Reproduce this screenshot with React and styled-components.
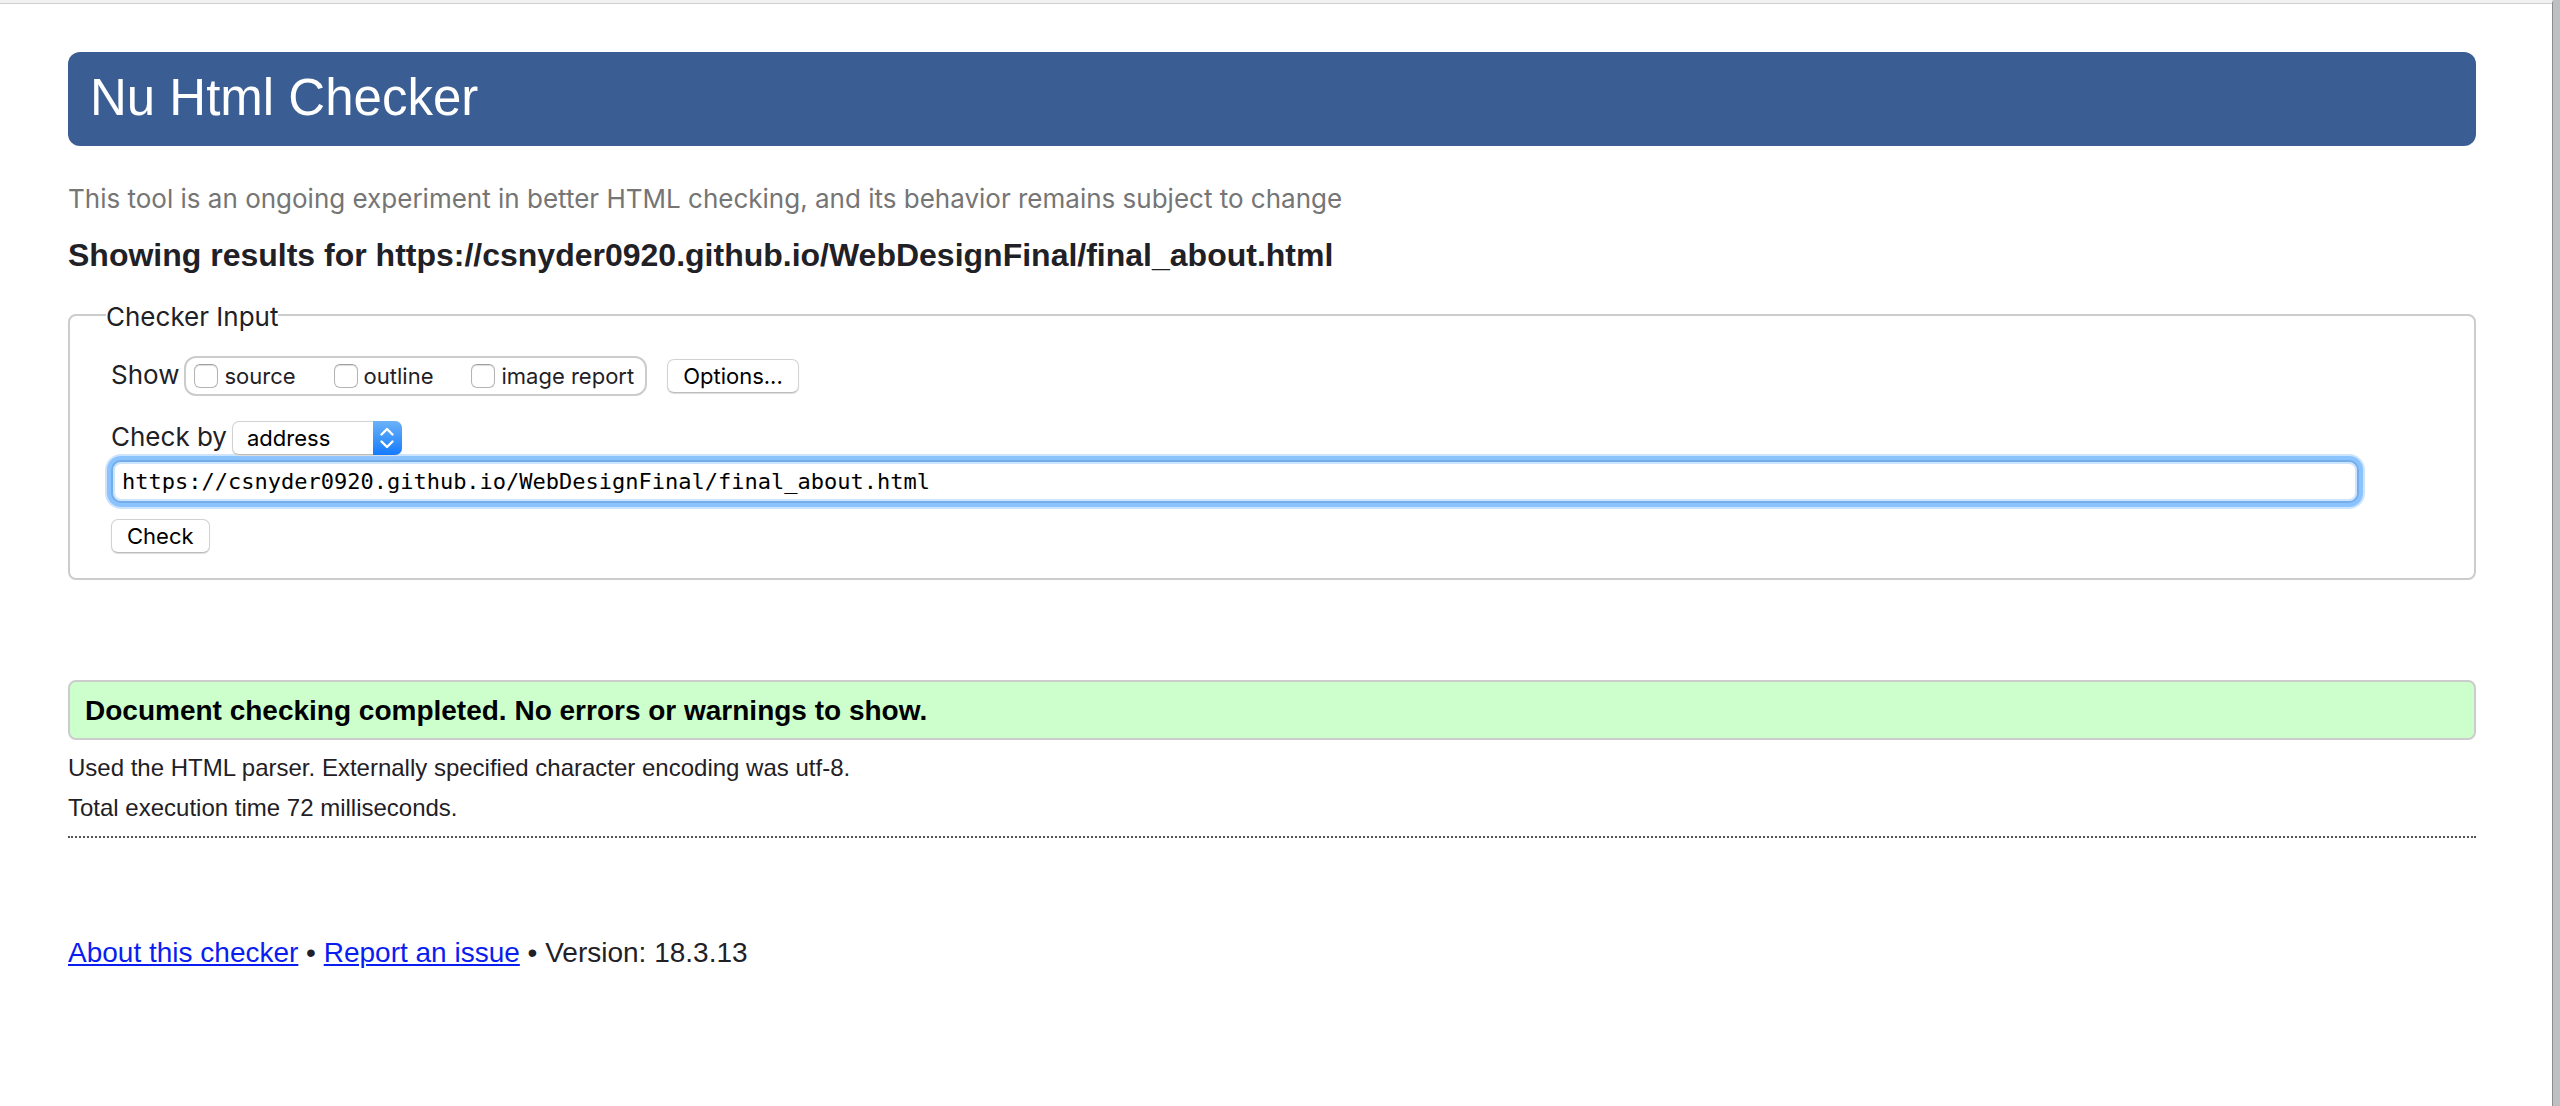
import React, { useState } from "react";
import styled, { createGlobalStyle } from "styled-components";

const ui = `Inter, "Open Sans", sans-serif`;
const body = `"Liberation Sans", Arial, sans-serif`;
const mono = `"DejaVu Sans Mono", "Liberation Mono", monospace`;

const GlobalStyle = createGlobalStyle`
  *, *::before, *::after { box-sizing: border-box; }
  body {
    margin: 0;
    background: #fff;
    color: #1f2126;
    font-family: ${body};
  }
`;

const Window = styled.div`
  min-height: 100vh;
  border-right: 7px solid #bebfc1;
`;

const Viewport = styled.div`
  min-height: 100vh;
  border-top: 3px solid #f1f1f1;
  border-right: 1px solid #8c8c8c;
`;

const Page = styled.div`
  padding: 48px 76px 48px 68px;
  border-top: 1px solid #cfcfcf;
`;

const Banner = styled.header`
  padding: 0 22px 2px;
  border-radius: 12px;
  background: #3a5e93;
`;

const Title = styled.h1`
  margin: 0;
  color: #fff;
  font-size: 51px;
  font-weight: 400;
  line-height: 92px;
`;

const Tagline = styled.p`
  margin: 37px 0 0;
  color: #757575;
  font-family: ${ui};
  font-size: 26px;
  line-height: 32px;
`;

const ResultsHeading = styled.h2`
  margin: 20px 0 0;
  font-size: 32px;
  font-weight: 700;
  line-height: 40px;
`;

const InputPanel = styled.fieldset`
  margin: 22px 0 0;
  padding: 0 36px 25px;
  border: 2px solid #ccc;
  border-radius: 8px;
  font-family: ${ui};
  font-size: 26px;
  line-height: 32px;
`;

const PanelTitle = styled.legend`
  padding: 4px 0 0;
`;

const PanelBody = styled.div`
  display: flex;
  flex-direction: column;
  align-items: flex-start;
  padding: 23px 5px 0;
`;

const Row = styled.div`
  display: flex;
  align-items: baseline;
  gap: 20px;
`;

const Field = styled.div`
  display: flex;
  align-items: baseline;
  gap: 5px;
`;

const CheckGroup = styled.div`
  display: flex;
  align-items: baseline;
  gap: 38px;
  padding: 0 11px 0 8px;
  border: 2px solid #ccc;
  border-radius: 12px;
`;

const CheckLabel = styled.label`
  display: flex;
  align-items: center;
  gap: 6px;
  font-size: 22px;
  line-height: 36px;
`;

const CheckText = styled.span`
  align-self: baseline;
`;

const CheckBox = styled.input`
  appearance: none;
  width: 24px;
  height: 24px;
  margin: 0;
  border: 1px solid #b4b4b4;
  border-top-color: #a0a0a0;
  border-radius: 6px;
  background: #fff;
  box-shadow: inset 0 1px 1px #ddd;

  &:checked {
    background: #2a8bfd;
  }
`;

const Button = styled.button`
  height: 34px;
  padding: 0 15px;
  border: 1px solid #d2d2d2;
  border-bottom-color: #bcbcbc;
  border-radius: 7px;
  background: #fff;
  box-shadow: 0 1px 1px #ddd;
  color: #000;
  font-family: ${ui};
  font-size: 22px;
  line-height: 32px;
`;

const SelectBox = styled.div`
  position: relative;
  display: flex;
  align-items: baseline;
`;

const Select = styled.select`
  appearance: none;
  width: 170px;
  height: 34px;
  padding: 0 40px 0 14px;
  border: 1px solid #d2d2d2;
  border-bottom-color: #bcbcbc;
  border-radius: 7px;
  background: #fff;
  box-shadow: 0 1px 1px #ddd;
  color: #000;
  font-family: ${ui};
  font-size: 22px;
  line-height: 32px;
`;

const SelectArrows = styled.span`
  position: absolute;
  top: 0;
  right: 0;
  bottom: 0;
  display: grid;
  place-items: center;
  width: 29px;
  border-radius: 0 7px 7px 0;
  background: linear-gradient(#6cb2f8, #147bfd);
  pointer-events: none;
`;

const AddressRow = styled.div`
  margin-top: 25px;
`;

const AddressLine = styled.div`
  align-self: stretch;
  display: flex;
  margin: 5px 74px 16px 0;
`;

const AddressInput = styled.input`
  flex: 1;
  min-width: 0;
  height: 43px;
  padding: 0 9px;
  border: 2px solid #74adea;
  border-radius: 10px;
  outline: none;
  background: #fff;
  box-shadow: 0 0 0 4px #8bc3ff, 0 0 0 6px #cde4fe, inset 0 0 0 2px #cde4fe;
  color: #000;
  font-family: ${mono};
  font-size: 22px;
`;

const Success = styled.p`
  margin: 100px 0 8px;
  padding: 13px 15px 11px;
  border: 2px solid #ccc;
  border-radius: 8px;
  background: #cfc;
  color: #000;
  font-size: 28px;
  font-weight: 700;
  line-height: 32px;
`;

const Detail = styled.p`
  margin: 0;
  font-size: 24px;
  line-height: 40px;
`;

const Divider = styled.hr`
  margin: 8px 0 0;
  border: 0;
  border-top: 2px dotted #555;
`;

const Footer = styled.footer`
  margin-top: 99px;
  font-size: 28px;
  line-height: 32px;
`;

const Link = styled.a`
  color: #0a1df0;
  text-decoration: underline;
  text-decoration-thickness: 2px;
  text-underline-offset: 2px;
`;

const views = ["source", "outline", "image report"];
const address = "https://csnyder0920.github.io/WebDesignFinal/final_about.html";

export default function App() {
  const [url, setUrl] = useState(address);

  return (
    <>
      <GlobalStyle />
      <Window>
        <Viewport>
          <Page>
            <Banner>
              <Title>Nu Html Checker</Title>
            </Banner>
            <Tagline>
              This tool is an ongoing experiment in better HTML checking, and its behavior remains
              subject to change
            </Tagline>
            <ResultsHeading>Showing results for {address}</ResultsHeading>

            <form onSubmit={(e) => e.preventDefault()}>
              <InputPanel>
                <PanelTitle>Checker Input</PanelTitle>
                <PanelBody>
                  <Row>
                    <Field>
                      <span id="show">Show</span>
                      <CheckGroup role="group" aria-labelledby="show">
                        {views.map((view) => (
                          <CheckLabel key={view}>
                            <CheckBox type="checkbox" />
                            <CheckText>{view}</CheckText>
                          </CheckLabel>
                        ))}
                      </CheckGroup>
                    </Field>
                    <Button type="button">Options...</Button>
                  </Row>
                  <AddressRow>
                    <Field>
                      <label htmlFor="method">Check by</label>
                      <SelectBox>
                        <Select id="method" defaultValue="address">
                          <option value="address">address</option>
                          <option value="file">file upload</option>
                          <option value="text">text input</option>
                        </Select>
                        <SelectArrows aria-hidden="true">
                          <svg width="16" height="22" viewBox="0 0 16 22" fill="none" stroke="#fff" strokeWidth="2.4" strokeLinecap="round" strokeLinejoin="round">
                            <path d="M2.5 7.5 8 2l5.5 5.5M2.5 14.5 8 20l5.5-5.5" />
                          </svg>
                        </SelectArrows>
                      </SelectBox>
                    </Field>
                  </AddressRow>
                  <AddressLine>
                    <AddressInput
                      type="text"
                      aria-label="Address"
                      spellCheck={false}
                      value={url}
                      onChange={(e) => setUrl(e.target.value)}
                    />
                  </AddressLine>
                  <Button type="submit">Check</Button>
                </PanelBody>
              </InputPanel>
            </form>

            <Success>Document checking completed. No errors or warnings to show.</Success>
            <Detail>Used the HTML parser. Externally specified character encoding was utf-8.</Detail>
            <Detail>Total execution time 72 milliseconds.</Detail>
            <Divider />

            <Footer>
              <Link href="#about">About this checker</Link> • <Link href="#issue">Report an issue</Link> •
              Version: 18.3.13
            </Footer>
          </Page>
        </Viewport>
      </Window>
    </>
  );
}
